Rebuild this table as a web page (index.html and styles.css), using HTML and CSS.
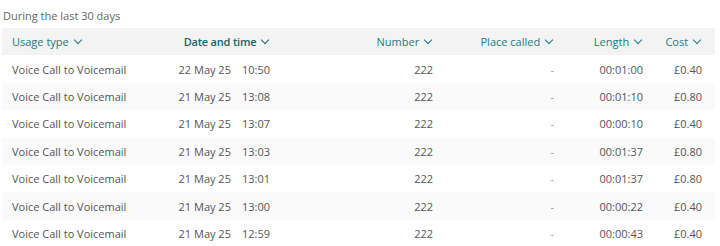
FILE: index.html
```html
<!DOCTYPE html>
<html lang="en">
<head>
    <meta charset="UTF-8">
    <title>Call history</title>
    <link rel="stylesheet" href="styles.css">
</head>
<body>
    <div class="usage">
        <p class="period">During the last 30 days</p>

        <div class="row head">
            <div class="cell left">Usage type <span class="chev"></span></div>
            <div class="cell sorted">Date and time <span class="chev"></span></div>
            <div class="cell">Number <span class="chev"></span></div>
            <div class="cell">Place called <span class="chev"></span></div>
            <div class="cell">Length <span class="chev"></span></div>
            <div class="cell">Cost <span class="chev"></span></div>
        </div>

        <div class="row">
            <div class="cell left">Voice Call to Voicemail</div>
            <div class="cell">22 May 25<span class="time">10:50</span></div>
            <div class="cell">222</div>
            <div class="cell dash">-</div>
            <div class="cell">00:01:00</div>
            <div class="cell">£0.40</div>
        </div>
        <div class="row">
            <div class="cell left">Voice Call to Voicemail</div>
            <div class="cell">21 May 25<span class="time">13:08</span></div>
            <div class="cell">222</div>
            <div class="cell dash">-</div>
            <div class="cell">00:01:10</div>
            <div class="cell">£0.80</div>
        </div>
        <div class="row">
            <div class="cell left">Voice Call to Voicemail</div>
            <div class="cell">21 May 25<span class="time">13:07</span></div>
            <div class="cell">222</div>
            <div class="cell dash">-</div>
            <div class="cell">00:00:10</div>
            <div class="cell">£0.40</div>
        </div>
        <div class="row">
            <div class="cell left">Voice Call to Voicemail</div>
            <div class="cell">21 May 25<span class="time">13:03</span></div>
            <div class="cell">222</div>
            <div class="cell dash">-</div>
            <div class="cell">00:01:37</div>
            <div class="cell">£0.80</div>
        </div>
        <div class="row">
            <div class="cell left">Voice Call to Voicemail</div>
            <div class="cell">21 May 25<span class="time">13:01</span></div>
            <div class="cell">222</div>
            <div class="cell dash">-</div>
            <div class="cell">00:01:37</div>
            <div class="cell">£0.80</div>
        </div>
        <div class="row">
            <div class="cell left">Voice Call to Voicemail</div>
            <div class="cell">21 May 25<span class="time">13:00</span></div>
            <div class="cell">222</div>
            <div class="cell dash">-</div>
            <div class="cell">00:00:22</div>
            <div class="cell">£0.40</div>
        </div>
        <div class="row">
            <div class="cell left">Voice Call to Voicemail</div>
            <div class="cell">21 May 25<span class="time">12:59</span></div>
            <div class="cell">222</div>
            <div class="cell dash">-</div>
            <div class="cell">00:00:43</div>
            <div class="cell">£0.40</div>
        </div>
    </div>
</body>
</html>
```

FILE: styles.css
```css
body {
    margin: 0;
    font-family: "Open Sans", "Noto Sans", sans-serif;
    font-size: 11px;
    color: #555;
    background: #fff;
}
.usage {
    width: 713px;
    margin-left: 2px;
}
.period {
    margin: 0;
    height: 28px;
    line-height: 32px;
    padding-left: 1px;
    color: #666;
}
.row {
    display: grid;
    grid-template-columns: 138px 140px 163px 121px 89px 62px;
    height: 27.4px;
    align-items: center;
}
.row:nth-child(even) {
    background: #fafafa;
}
.row.head {
    background: #f3f3f3;
    color: #1c7b82;
}
.cell {
    text-align: right;
    padding-right: 10px;
    white-space: nowrap;
}
.cell:last-child {
    padding-right: 13px;
}
.cell.left {
    text-align: left;
    padding-left: 10px;
}
.sorted {
    font-weight: 600;
    color: #17666d;
    letter-spacing: -0.2px;
}
.time {
    margin-left: 11px;
}
.dash {
    color: #999;
}
.chev {
    display: inline-block;
    width: 5px;
    height: 5px;
    border-right: 1.2px solid currentColor;
    border-bottom: 1.2px solid currentColor;
    transform: rotate(45deg);
    margin: 0 2px 3px 3px;
}
```
